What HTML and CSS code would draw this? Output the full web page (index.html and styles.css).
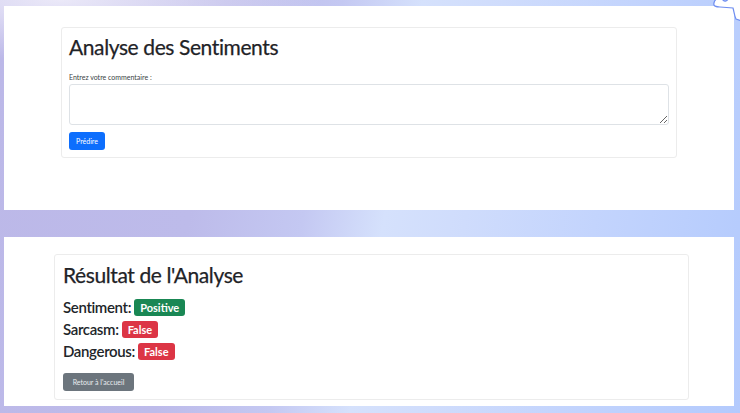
FILE: index.html
```html
<!DOCTYPE html>
<html lang="fr">
<head>
<meta charset="utf-8">
<title>Analyse des Sentiments</title>
<link rel="stylesheet" href="styles.css">
</head>
<body>
<svg class="blob" width="30" height="24" viewBox="0 0 30 24">
  <path d="M2 6 C3 1 8 0 11 3 C13 5 15 4 17 1 L30 0 L30 24 L24 22 C22 18 22 14 21 11 L8 10 C4 10 1 9 2 6 Z" fill="#ffffff" stroke="#6f8ef0" stroke-width="1.2"/>
</svg>
<main class="page">
  <section class="panel panel-top">
    <div class="card card-form">
      <h1 class="title">Analyse des Sentiments</h1>
      <label class="label" for="comment">Entrez votre commentaire :</label>
      <textarea id="comment" class="textarea"></textarea>
      <button class="btn btn-primary" type="button">Prédire</button>
    </div>
  </section>
  <section class="panel panel-bottom">
    <div class="card card-result">
      <h1 class="title">Résultat de l'Analyse</h1>
      <div class="rows">
        <div class="row">Sentiment: <span class="badge badge-green">Positive</span></div>
        <div class="row">Sarcasm: <span class="badge badge-red">False</span></div>
        <div class="row">Dangerous: <span class="badge badge-red">False</span></div>
      </div>
      <button class="btn btn-secondary" type="button">Retour à l'accueil</button>
    </div>
  </section>
</main>
</body>
</html>
```
FILE: styles.css
```css
html, body {
  margin: 0;
  height: 100%;
}
body {
  font-family: "Lato", "Noto Sans", sans-serif;
  color: #212529;
  background:
    radial-gradient(ellipse 260px 60px at 60px 0, rgba(240,238,250,0.9), rgba(240,238,250,0)),
    linear-gradient(100deg, #bcb8e8 0%, #bdbbea 28%, #c4c8f2 42%, #d5e1fc 52%, #cfdcfc 62%, #c3d4fd 78%, #b3cafd 100%);
  overflow: hidden;
  position: relative;
}
.blob {
  position: absolute;
  top: -3px;
  right: -2px;
}
.page {
  display: flex;
  flex-direction: column;
  gap: 27px;
  padding: 6px 6px 7px 4px;
}
.panel {
  background: #ffffff;
  box-sizing: border-box;
}
.panel-top {
  height: 204px;
  padding: 21px 0 0 57px;
}
.panel-bottom {
  height: 169px;
  padding: 17px 0 0 50px;
}
.card {
  box-sizing: border-box;
  border: 1px solid #ececec;
  border-radius: 3px;
  background: #fff;
  padding: 6px 7px 7px 7px;
  display: flex;
  flex-direction: column;
  align-items: flex-start;
}
.card-form {
  width: 616px;
  height: 131px;
}
.card-result {
  width: 635px;
  height: 146px;
  padding: 7px 8px;
}
.title {
  margin: 0;
  font-size: 21px;
  font-weight: 400;
  line-height: 25px;
  letter-spacing: -0.4px;
  color: #1f2327;
  -webkit-text-stroke: 0.25px #1f2327;
}
.label {
  margin-top: 14px;
  font-size: 7px;
  line-height: 9px;
  color: #3a3f44;
}
.textarea {
  margin-top: 2px;
  width: 600px;
  height: 41px;
  box-sizing: border-box;
  border: 1px solid #dee2e6;
  border-radius: 3px;
  resize: vertical;
  font: inherit;
}
.btn {
  border: none;
  border-radius: 3px;
  color: #fff;
  font-family: inherit;
  font-size: 7px;
  line-height: 18px;
  height: 18px;
  padding: 0 6px;
}
.btn-primary {
  margin-top: 7px;
  background: #0d6efd;
  width: 36px;
  padding: 0;
}
.btn-secondary {
  margin-top: 13px;
  background: #6c757d;
  width: 71px;
  padding: 0;
  color: #e9ecef;
}
.rows {
  margin-top: 11px;
  display: flex;
  flex-direction: column;
  gap: 4px;
}
.row {
  font-size: 15px;
  font-weight: 600;
  line-height: 18px;
  letter-spacing: -0.35px;
  display: flex;
  align-items: center;
  gap: 3px;
}
.badge {
  display: inline-block;
  color: #fff;
  font-size: 11px;
  font-weight: 700;
  line-height: 17px;
  height: 17px;
  padding: 0 6px;
  border-radius: 3px;
  letter-spacing: 0;
}
.badge-green { background: #198754; }
.badge-red { background: #dc3545; }
```
